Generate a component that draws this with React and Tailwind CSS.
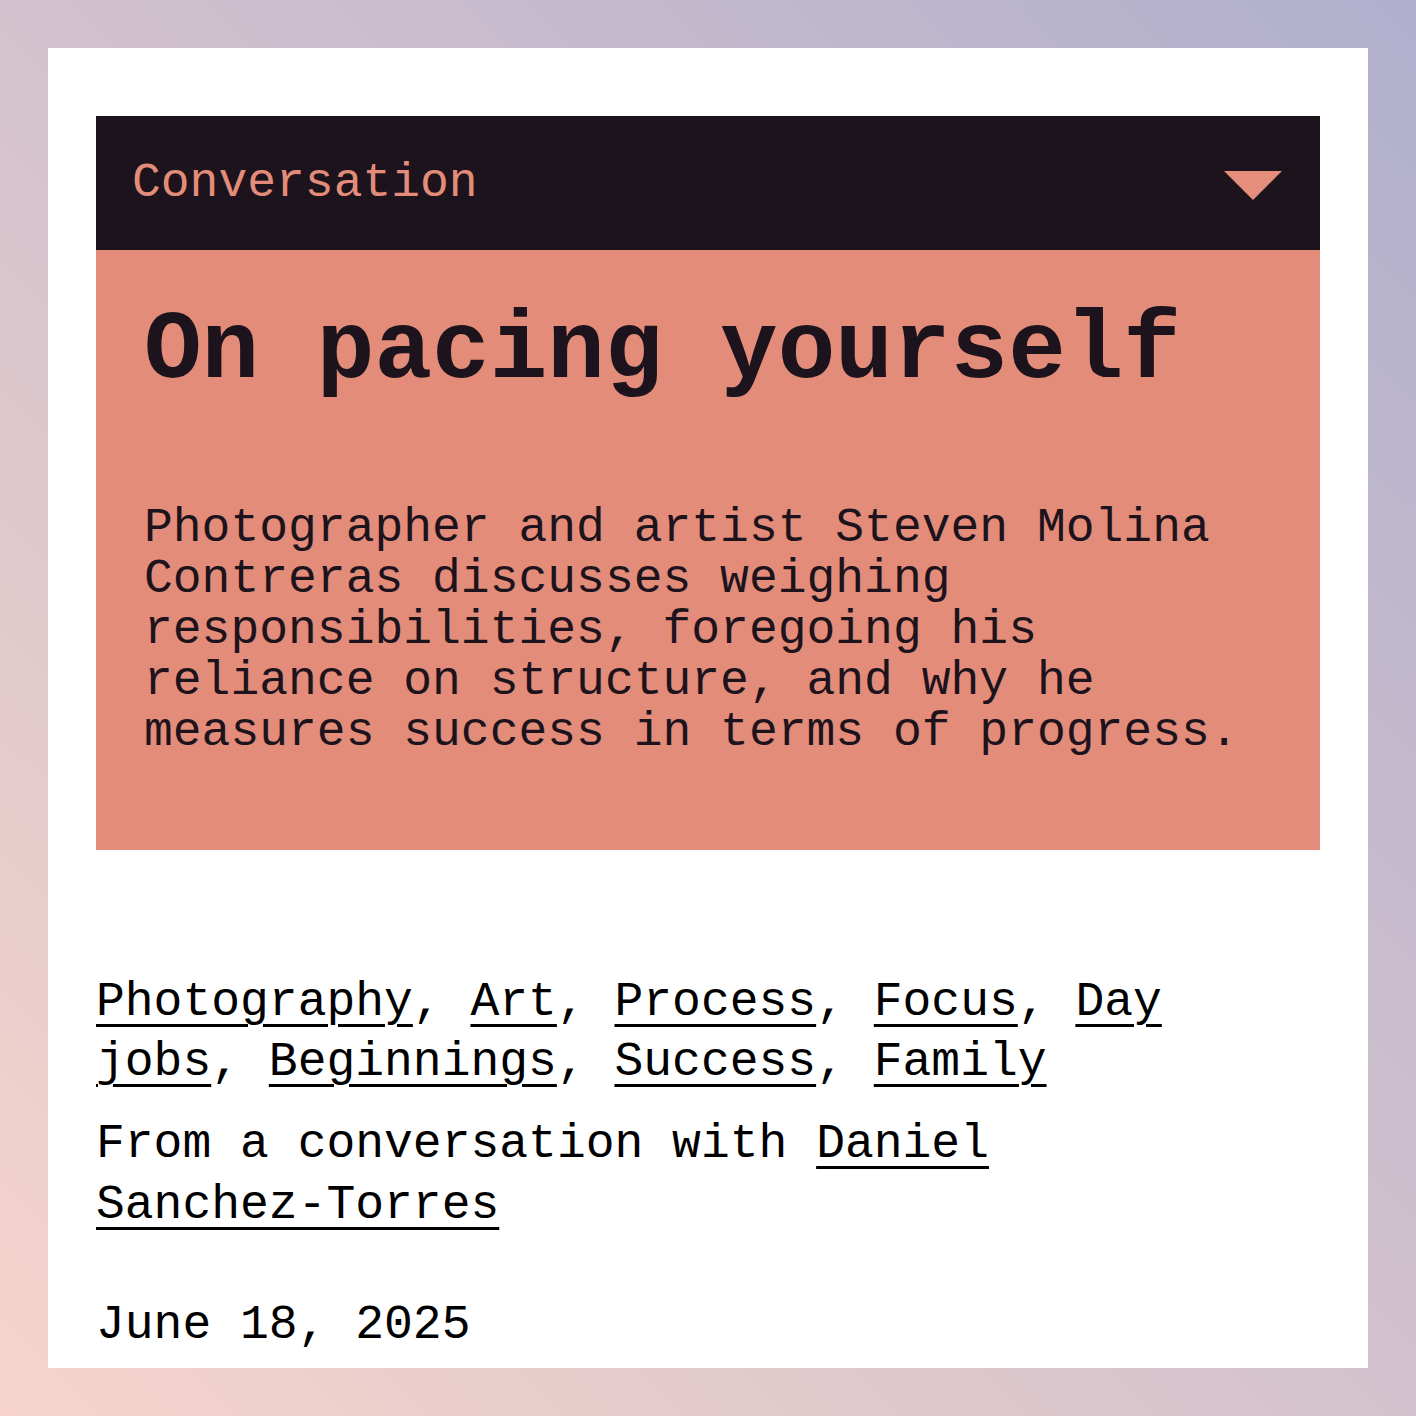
import React from 'react';

const tags = ['Photography', 'Art', 'Process', 'Focus', 'Day jobs', 'Beginnings', 'Success', 'Family'];

const mono = { fontFamily: "'Liberation Mono', 'Courier New', monospace" };

export default function App() {
  return (
    <div className="min-h-screen w-full bg-linear-to-tr from-[#f6d4cb] to-[#b0afcd] p-12" style={mono}>
      <div className="h-[1320px] overflow-hidden bg-white px-12 pt-[68px]">
        {/* header bar */}
        <div className="flex h-[134px] items-center justify-between bg-[#1c131d] pl-9 pr-[38px]">
          <span className="text-[48px] leading-none text-[#e28c79]">Conversation</span>
          <svg width="58" height="29" viewBox="0 0 58 29" className="mt-1">
            <polygon points="0,0 58,0 29,29" fill="#e58e7b" />
          </svg>
        </div>

        {/* salmon panel */}
        <div className="bg-[#e38c79] px-12 pt-[54px] pb-[92px] text-[#1c131d]">
          <h1 className="text-[96px] font-bold leading-none">On pacing yourself</h1>
          <p className="mt-[103px] text-[48px] leading-[51px]">
            Photographer and artist Steven Molina Contreras discusses weighing responsibilities, foregoing his reliance on structure, and why he measures success in terms of progress.
          </p>
        </div>

        {/* tags */}
        <p className="mt-[122px] text-[48px] leading-[60px] text-black">
          {tags.map((t, i) => (
            <React.Fragment key={t}>
              <a href="#" className="underline decoration-[3px] underline-offset-[9px]">{t}</a>
              {i < tags.length - 1 && ', '}
            </React.Fragment>
          ))}
        </p>

        <p className="mt-[22px] text-[48px] leading-[61px] text-black">
          From a conversation with{' '}
          <a href="#" className="underline decoration-[3px] underline-offset-[9px]">
            Daniel <span className="whitespace-nowrap">Sanchez-Torres</span>
          </a>
        </p>

        <p className="mt-[59px] text-[48px] leading-[60px] text-black">June 18, 2025</p>
      </div>
    </div>
  );
}
